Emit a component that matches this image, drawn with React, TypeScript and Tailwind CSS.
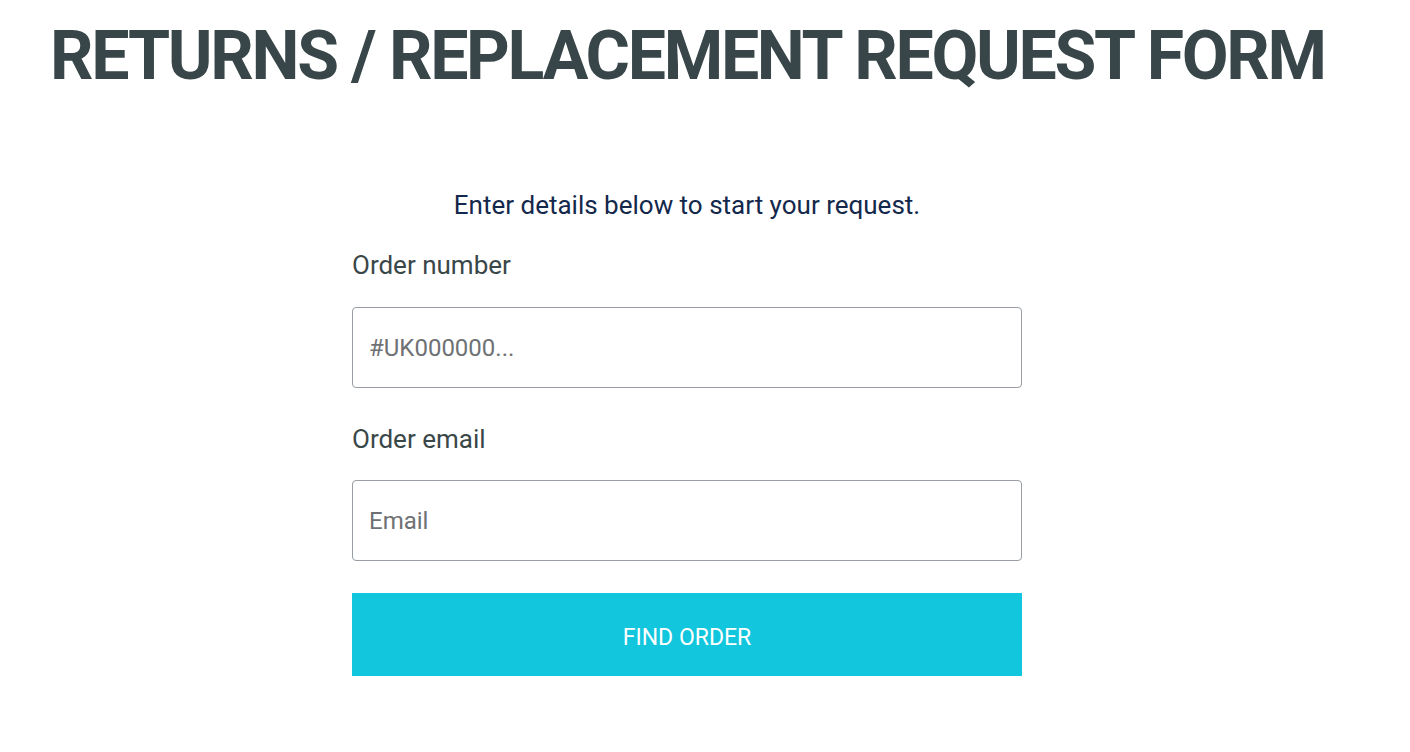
import React from "react";

const App = () => {
    return (
        <div className="min-h-screen bg-white font-['Roboto',sans-serif]">
            <h1 className="whitespace-nowrap pl-[50px] pt-[18px] text-[68px] font-bold leading-[76px] tracking-[-2.3px] text-[#384649]">
                RETURNS / REPLACEMENT REQUEST FORM
            </h1>
            <div className="mt-[95px] ml-[352px] flex w-[670px] flex-col">
                <p className="text-center text-[26px] leading-[32px] text-[#14284b]">
                    Enter details below to start your request.
                </p>
                <label className="mt-[29px] text-[26px] leading-[30px] text-[#3a4749]">Order number</label>
                <input
                    type="text"
                    placeholder="#UK000000..."
                    className="mt-[27px] h-[81px] w-full rounded-[4px] border border-[#989ea3] px-4 text-[24px] text-[#3a4749] placeholder:text-[#6e7174] outline-none"
                />
                <label className="mt-[36px] text-[26px] leading-[30px] text-[#3a4749]">Order email</label>
                <input
                    type="email"
                    placeholder="Email"
                    className="mt-[26px] h-[81px] w-full rounded-[4px] border border-[#989ea3] px-4 text-[24px] text-[#3a4749] placeholder:text-[#6e7174] outline-none"
                />
                <button className="mt-[32px] h-[83px] w-full bg-[#12c6de] pt-[7px] text-[23px] uppercase text-white">
                    Find Order
                </button>
            </div>
        </div>
    );
};

export default App;
